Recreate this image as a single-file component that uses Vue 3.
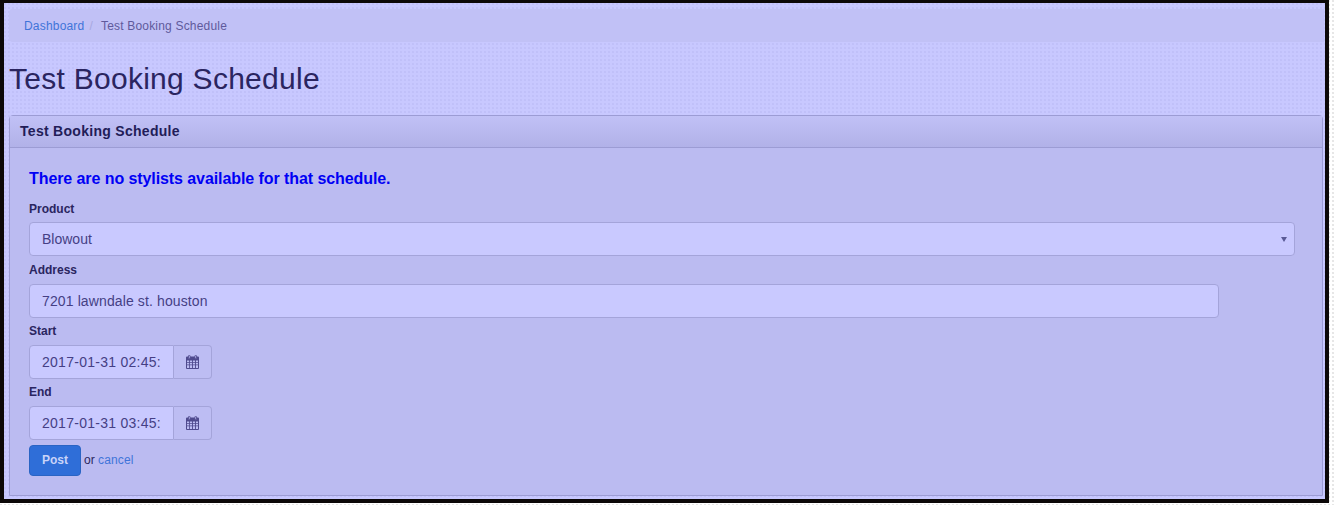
<template>
  <div class="frame">
    <nav class="breadcrumb">
      <a class="link">Dashboard</a>
      <span class="sep">/</span>
      <span class="current">Test Booking Schedule</span>
    </nav>
    <h1 class="title">Test Booking Schedule</h1>
    <section class="panel">
      <header class="panel-heading">Test Booking Schedule</header>
      <div class="panel-body">
        <p class="alert">There are no stylists available for that schedule.</p>
        <label class="label">Product</label>
        <div class="select-wrap">
          <select class="control">
            <option>Blowout</option>
          </select>
          <span class="caret"></span>
        </div>
        <label class="label">Address</label>
        <input class="control address" value="7201 lawndale st. houston" />
        <template v-for="f in dates" :key="f.label">
          <label class="label">{{ f.label }}</label>
          <div class="date">
            <input class="control date-input" :value="f.value" />
            <span class="addon">
              <svg width="13" height="14" viewBox="0 0 13 14" class="cal">
                <path fill-rule="evenodd" d="M1 1.600h11a1 1 0 0 1 1 1V13a1 1 0 0 1-1 1H1a1 1 0 0 1-1-1V2.600a1 1 0 0 1 1-1zM1 5.500V7h2.200V5.500zm3 0V7h2.100V5.500zm3 0V7h2.100V5.500zm3 0V7h2V5.500zM1 7.800v1.700h2.200V7.800zm3 0v1.700h2.100V7.800zm3 0v1.700h2.100V7.800zm3 0v1.700h2V7.800zM1 10.300V13h2.200v-2.700zm3 0V13h2.100v-2.700zm3 0V13h2.100v-2.700zm3 0V13h2v-2.700z" />
                <rect class="ring" x="2.500" y="0.400" width="1.600" height="3" rx="0.500" />
                <rect class="ring" x="8.900" y="0.400" width="1.600" height="3" rx="0.500" />
              </svg>
            </span>
          </div>
        </template>
        <div class="actions">
          <button class="post">Post</button>
          <span class="or">or</span>
          <a class="link">cancel</a>
        </div>
      </div>
    </section>
  </div>
</template>

<script setup>
const dates = [
  { label: 'Start', value: '2017-01-31 02:45:00' },
  { label: 'End', value: '2017-01-31 03:45:00' }
]
</script>

<style>
html, body {
  margin: 0;
  height: 505px;
  overflow: hidden;
  background-color: #fff;
  background-image: radial-gradient(circle at 1px 1px, #e6e6e6 0.7px, transparent 1px);
  background-size: 4px 4px;
}
</style>

<style scoped>
.frame {
  box-sizing: border-box;
  width: 1329px;
  height: 503px;
  border: solid #0c0808;
  border-width: 3px 4px 4px 4px;
  padding: 6px 1px 0 5px;
  background-color: #c8c8ff;
  background-image: radial-gradient(circle at 1px 1px, #c0c0f9 0.7px, transparent 1px);
  background-size: 4px 4px;
  font-family: "Liberation Sans", Arial, sans-serif;
  color: #2a2560;
  overflow: hidden;
}
.breadcrumb {
  display: flex;
  align-items: center;
  height: 33px;
  padding: 0 15px;
  background: #c1c1f6;
  border-radius: 4px 0 0 4px;
  font-size: 12px;
  letter-spacing: 0.19px;
}
.link { color: #3f74d9; }
.sep { color: #a8a8e0; padding: 0 8px 0 5px; }
.current { color: #5f5a9c; }
.title {
  margin: 20px 0 20px;
  font-size: 30px;
  font-weight: 400;
  line-height: 33px;
  letter-spacing: 0.27px;
}
.panel {
  height: 381px;
  margin-right: 1px;
  box-sizing: border-box;
  border: 1px solid #9c9cd4;
  border-radius: 4px 4px 0 0;
  background: #bbbbf1;
}
.panel-heading {
  height: 32px;
  box-sizing: border-box;
  padding: 0 10px 2px;
  display: flex;
  align-items: center;
  font-size: 14px;
  font-weight: 700;
  letter-spacing: 0.29px;
  color: #221d58;
  background: linear-gradient(#c1c1f6, #b1b1e8);
  border-bottom: 1px solid #9c9cd4;
}
.panel-body { padding: 22px 19px 0; }
.alert {
  margin: 0 0 1px;
  font-size: 16px;
  font-weight: 700;
  line-height: 17px;
  letter-spacing: -0.08px;
  color: #0000f5;
}
.label {
  display: block;
  font-size: 12px;
  font-weight: 700;
  line-height: 14px;
  margin-top: 6px;
  margin-bottom: 7px;
  color: #2a2560;
}
.alert + .label { margin-top: 15px; }
.control {
  box-sizing: border-box;
  display: block;
  height: 34px;
  padding: 0 12px;
  font: 14px "Liberation Sans", Arial, sans-serif;
  color: #453f85;
  background: #c9c9ff;
  border: 1px solid #a4a4da;
  border-radius: 4px;
  outline: none;
}
.select-wrap { position: relative; width: 1266px; margin-top: -1px; margin-bottom: 7px; }
.select-wrap .control { width: 100%; appearance: none; }
.caret {
  position: absolute;
  right: 8px;
  top: 15px;
  border: solid transparent;
  border-width: 5px 3px 0;
  border-top-color: #5a5a96;
}
.address { width: 1190px; letter-spacing: 0.12px; }
.date { display: flex; width: 183px; }
.date-input {
  width: 145px;
  border-radius: 4px 0 0 4px;
  border-right: 1px solid #a4a4da;
  letter-spacing: 0.27px;
}
.addon {
  flex: 1;
  height: 34px;
  box-sizing: border-box;
  display: flex;
  align-items: center;
  justify-content: center;
  background: #bdbdf3;
  border: 1px solid #a4a4da;
  border-left: 0;
  border-radius: 0 4px 4px 0;
}
.cal { fill: #4f4a8e; }
.ring { fill: #bdbdf3; stroke: #4f4a8e; stroke-width: 0.8; }
.actions {
  display: flex;
  align-items: center;
  margin-top: 5px;
  font-size: 12px;
  letter-spacing: 0.15px;
}
.actions .or, .actions .link { padding-bottom: 2px; }
.post {
  width: 52px;
  height: 31px;
  padding: 0 0 2px;
  font: 700 12px "Liberation Sans", Arial, sans-serif;
  color: #c9d4f8;
  background: #2f6ed8;
  border: 1px solid #2a64c4;
  border-radius: 4px;
}
.or { margin: 0 3px 0 3px; color: #2a2560; }
</style>
